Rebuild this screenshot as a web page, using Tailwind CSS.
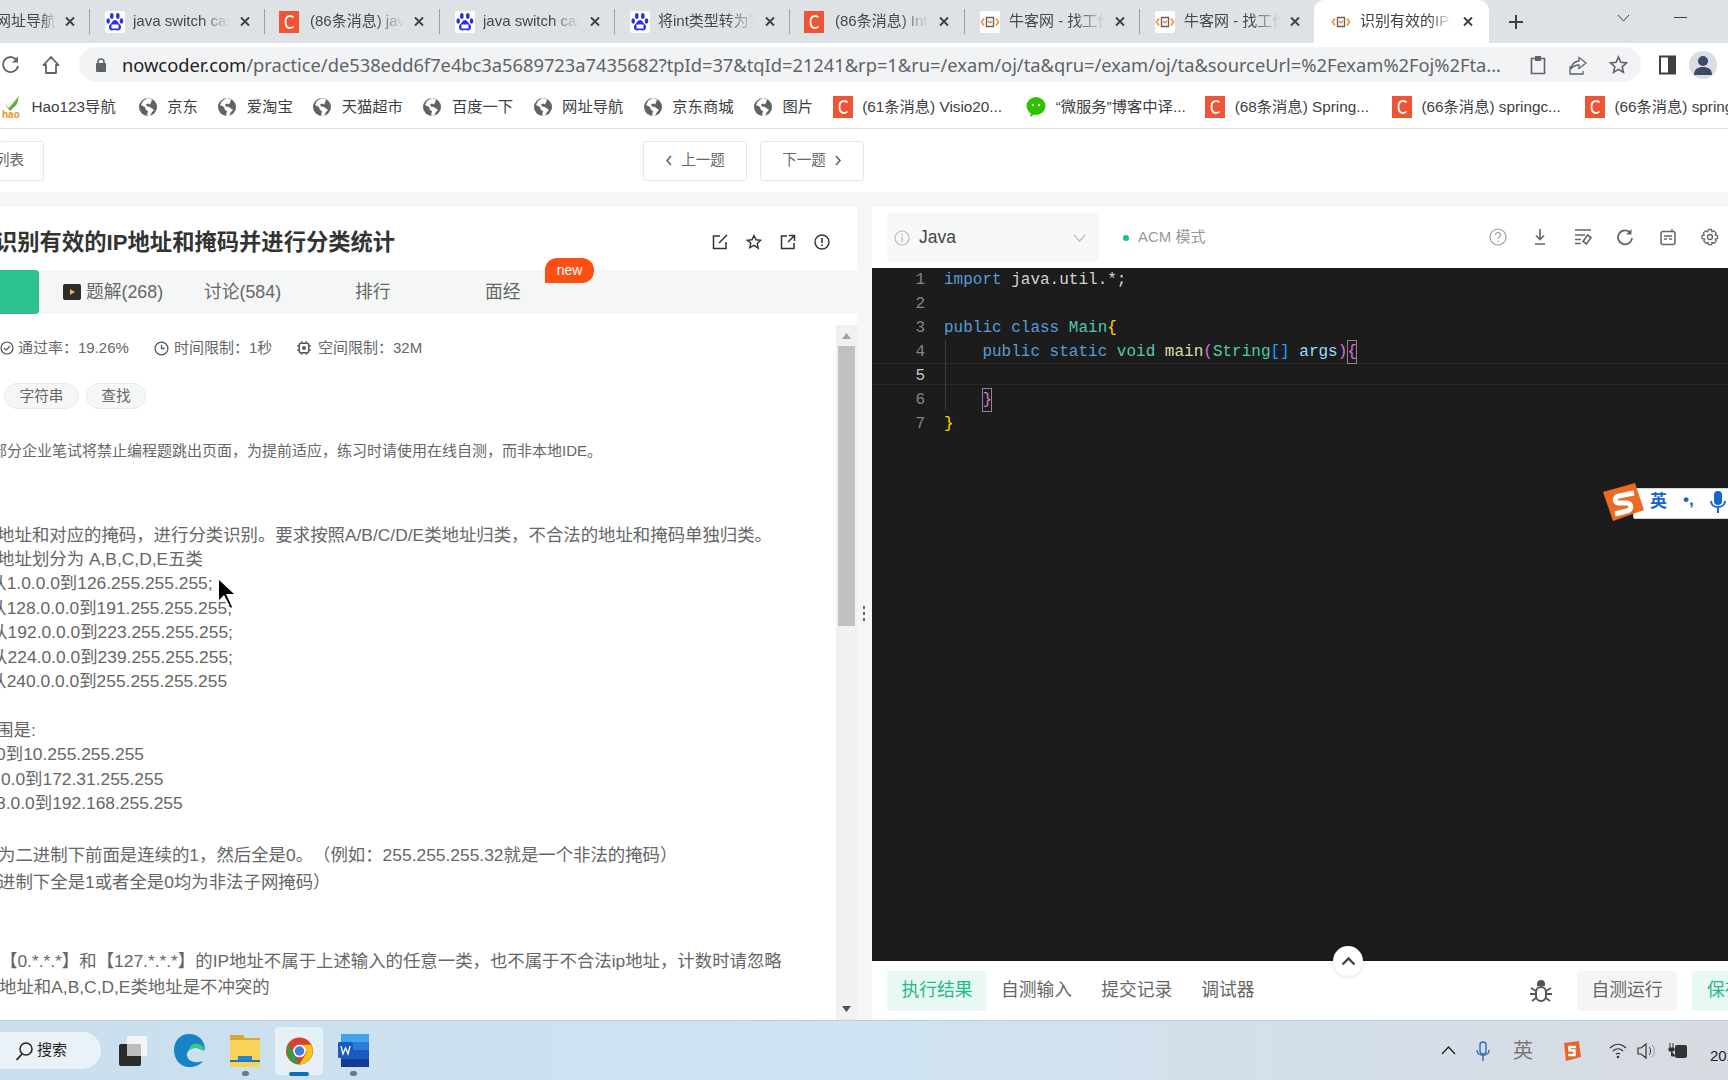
<!DOCTYPE html>
<html lang="zh">
<head>
<meta charset="utf-8">
<title>识别有效的IP地址和掩码并进行分类统计</title>
<script src="https://cdn.jsdelivr.net/npm/@tailwindcss/browser@4"></script>
</head>
<body class="overflow-hidden">
<svg class="absolute w-0 h-0">
  <symbol id="globe" viewBox="0 0 20 20"><circle cx="10" cy="10" r="9" fill="#5f6368"/><path d="M9 1.500 5 4 3 8l4 2 1 3 2 1-1 4.500 3 .5 2-4 2-2-4-3-3-.5-1-2 2-1 2 1 1-2 1-3-4-1.500Z" fill="#fff"/></symbol>
  <symbol id="csdn" viewBox="0 0 20 22"><rect width="20" height="22" fill="#ef5434"/><path d="M14.500 6.500C13.500 5.200 12 5 11 5 8 5 6.500 7.800 6.500 11s1.500 6 4.500 6c1 0 2.500-.3 3.500-1.500" fill="none" stroke="#fff" stroke-width="1.800"/></symbol>
  <symbol id="baidu" viewBox="0 0 20 22"><rect width="20" height="22" rx="2" fill="#fff"/><g fill="#2932e1"><ellipse cx="6.800" cy="5" rx="1.800" ry="3"/><ellipse cx="12.800" cy="5" rx="1.800" ry="3"/><ellipse cx="3.200" cy="10" rx="1.800" ry="2.800"/><ellipse cx="16.500" cy="10" rx="1.800" ry="2.800"/><path d="M10 9c-2.500 0-3 3-5 4.500C3 15.500 4 19.500 7 19.500c1.300 0 2-.4 3-.4s1.800.4 3 .4c3 0 4-4 2-6C13 12 12.500 9 10 9Z"/></g><rect x="6.500" y="13.500" width="7" height="4" fill="#fff"/></symbol>
  <symbol id="nk" viewBox="0 0 20 22"><rect width="20" height="22" rx="2" fill="#fff"/><path d="M6.500 6.500h7v9h-7Z" fill="none" stroke="#6b6258" stroke-width="1.400"/><path d="m8 10 2 2 2-2" fill="none" stroke="#b98a4a" stroke-width="1.100"/><path d="M4 7.500 1.500 11 4 14.500M16 7.500l2.500 3.500-2.500 3.500" fill="none" stroke="#ef9a3c" stroke-width="1.800"/></symbol>
  <symbol id="x" viewBox="0 0 12 12"><path d="m2 2 8 8M10 2l-8 8" stroke="#3c4043" stroke-width="1.800"/></symbol>
</svg>

<div class="relative w-[1728px] h-[1080px] overflow-hidden flex flex-col bg-white text-[#666] font-['Liberation_Sans','Noto_Sans_CJK_SC',sans-serif]">

  <!-- browser tabs -->
  <div class="h-[43px] shrink-0 bg-[#dee1e6] flex items-stretch text-[15px] text-[#45474a]">
    <div class="relative w-[90px] shrink-0 flex items-center overflow-hidden">
      <span class="w-[56px] overflow-hidden whitespace-nowrap flex justify-end [mask-image:linear-gradient(to_right,black_75%,transparent)]">网址导航</span>
      <svg class="ml-[8px] w-[12px] h-[13px]"><use href="#x"/></svg>
      <span class="absolute right-0 top-[9px] w-px h-[25px] bg-[#9aa0a6]"></span>
    </div>
    <div class="relative w-[175px] shrink-0 flex items-center pl-[15px]">
      <svg class="w-[20px] h-[22px] shrink-0"><use href="#baidu"/></svg>
      <span class="ml-[8px] w-[97px] overflow-hidden whitespace-nowrap [mask-image:linear-gradient(to_right,black_70%,transparent)]">java switch case</span>
      <svg class="ml-[9px] w-[12px] h-[13px]"><use href="#x"/></svg>
      <span class="absolute right-0 top-[9px] w-px h-[25px] bg-[#9aa0a6]"></span>
    </div>
    <div class="relative w-[175px] shrink-0 flex items-center pl-[14px]">
      <svg class="w-[20px] h-[22px] shrink-0"><use href="#csdn"/></svg>
      <span class="ml-[11px] w-[94px] overflow-hidden whitespace-nowrap [mask-image:linear-gradient(to_right,black_70%,transparent)]">(86条消息) java</span>
      <svg class="ml-[9px] w-[12px] h-[13px]"><use href="#x"/></svg>
      <span class="absolute right-0 top-[9px] w-px h-[25px] bg-[#9aa0a6]"></span>
    </div>
    <div class="relative w-[175px] shrink-0 flex items-center pl-[15px]">
      <svg class="w-[20px] h-[22px] shrink-0"><use href="#baidu"/></svg>
      <span class="ml-[8px] w-[97px] overflow-hidden whitespace-nowrap [mask-image:linear-gradient(to_right,black_70%,transparent)]">java switch case</span>
      <svg class="ml-[9px] w-[12px] h-[13px]"><use href="#x"/></svg>
      <span class="absolute right-0 top-[9px] w-px h-[25px] bg-[#9aa0a6]"></span>
    </div>
    <div class="relative w-[175px] shrink-0 flex items-center pl-[15px]">
      <svg class="w-[20px] h-[22px] shrink-0"><use href="#baidu"/></svg>
      <span class="ml-[8px] w-[97px] overflow-hidden whitespace-nowrap [mask-image:linear-gradient(to_right,black_70%,transparent)]">将int类型转为字符</span>
      <svg class="ml-[9px] w-[12px] h-[13px]"><use href="#x"/></svg>
      <span class="absolute right-0 top-[9px] w-px h-[25px] bg-[#9aa0a6]"></span>
    </div>
    <div class="relative w-[175px] shrink-0 flex items-center pl-[14px]">
      <svg class="w-[20px] h-[22px] shrink-0"><use href="#csdn"/></svg>
      <span class="ml-[11px] w-[94px] overflow-hidden whitespace-nowrap [mask-image:linear-gradient(to_right,black_70%,transparent)]">(86条消息) Int</span>
      <svg class="ml-[9px] w-[12px] h-[13px]"><use href="#x"/></svg>
      <span class="absolute right-0 top-[9px] w-px h-[25px] bg-[#9aa0a6]"></span>
    </div>
    <div class="relative w-[175px] shrink-0 flex items-center pl-[15px]">
      <svg class="w-[20px] h-[22px] shrink-0"><use href="#nk"/></svg>
      <span class="ml-[9px] w-[96px] overflow-hidden whitespace-nowrap [mask-image:linear-gradient(to_right,black_70%,transparent)]">牛客网 - 找工作</span>
      <svg class="ml-[9px] w-[12px] h-[13px]"><use href="#x"/></svg>
      <span class="absolute right-0 top-[9px] w-px h-[25px] bg-[#9aa0a6]"></span>
    </div>
    <div class="relative w-[174px] shrink-0 flex items-center pl-[15px]">
      <svg class="w-[20px] h-[22px] shrink-0"><use href="#nk"/></svg>
      <span class="ml-[9px] w-[96px] overflow-hidden whitespace-nowrap [mask-image:linear-gradient(to_right,black_70%,transparent)]">牛客网 - 找工作</span>
      <svg class="ml-[9px] w-[12px] h-[13px]"><use href="#x"/></svg>
    </div>
    <div class="w-[175px] shrink-0 flex items-center pl-[17px] bg-white rounded-t-[10px] text-[#3c4043]">
      <svg class="w-[20px] h-[22px] shrink-0"><use href="#nk"/></svg>
      <span class="ml-[9px] w-[92px] overflow-hidden whitespace-nowrap [mask-image:linear-gradient(to_right,black_75%,transparent)]">识别有效的IP地址</span>
      <svg class="ml-[10px] w-[12px] h-[13px]"><use href="#x"/></svg>
    </div>
    <svg class="ml-[19px] self-center w-[16px] h-[16px]" viewBox="0 0 16 16"><path d="M8 1v14M1 8h14" stroke="#3c4043" stroke-width="2"/></svg>
    <svg class="ml-[93px] self-center w-[13px] h-[8px] -mt-[8px]" viewBox="0 0 13 8"><path d="m1 1 5.500 6L12 1" fill="none" stroke="#3c4043"/></svg>
    <span class="ml-[44px] self-center w-[13px] h-px bg-[#3c4043] -mt-[8px]"></span>
  </div>

  <!-- address bar -->
  <div class="h-[43px] shrink-0 bg-white flex items-center">
    <svg class="ml-[2px] w-[18px] h-[20px]" viewBox="0 0 18 20"><path d="M15 5.500A7.500 7.500 0 1 0 16 11" fill="none" stroke="#5f6368" stroke-width="1.800"/><path d="M16 1.500v6h-6Z" fill="#5f6368"/></svg>
    <svg class="ml-[22px] w-[18px] h-[20px]" viewBox="0 0 18 20"><path d="M9 2 1.500 10H4v8h10v-8h2.500Z" fill="none" stroke="#5f6368" stroke-width="1.800" stroke-linejoin="round"/></svg>
    <div class="ml-[19px] w-[1562px] h-[35px] rounded-full bg-[#f1f3f4] flex items-center">
      <svg class="ml-[16px] w-[12px] h-[16px] shrink-0" viewBox="0 0 12 16"><path d="M3 7V5a3 3 0 0 1 6 0v2" fill="none" stroke="#5f6368" stroke-width="1.500"/><rect y="6" x="1" width="10" height="9" rx="1" fill="#5f6368"/></svg>
      <span class="ml-[15px] w-[1384px] shrink-0 whitespace-nowrap overflow-hidden text-[18.3px] text-[#5f6368] font-['Noto_Sans','Liberation_Sans',sans-serif]"><span class="text-[#202124]">nowcoder.com</span>/practice/de538edd6f7e4bc3a5689723a7435682?tpId=37&amp;tqId=21241&amp;rp=1&amp;ru=/exam/oj/ta&amp;qru=/exam/oj/ta&amp;sourceUrl=%2Fexam%2Foj%2Fta...</span>
      <svg class="ml-[24px] w-[16px] h-[20px] shrink-0" viewBox="0 0 16 20"><path d="M1.500 3.500h13v15h-13Z" fill="none" stroke="#5f6368" stroke-width="1.600"/><rect x="5" y="1" width="6" height="5" fill="#5f6368"/></svg>
      <svg class="ml-[23px] w-[18px] h-[20px] shrink-0" viewBox="0 0 18 20"><path d="M10 2.500 17 8l-7 5.500V10c-4 0-6 1-8 4 .5-4 3-7.500 8-8Z M1 11v8h13v-3" fill="none" stroke="#5f6368" stroke-width="1.300"/></svg>
      <svg class="ml-[22px] w-[19px] h-[20px] shrink-0" viewBox="0 0 19 20"><path d="m9.500 2 2.300 5.300 5.700.6-4.300 3.800 1.200 5.700-4.900-3-4.900 3 1.200-5.700L1.500 7.900l5.700-.6Z" fill="none" stroke="#5f6368" stroke-width="1.600"/></svg>
    </div>
    <svg class="ml-[18px] w-[17px] h-[20px]" viewBox="0 0 17 20"><path d="M1 1.500h15v17H1Z" fill="none" stroke="#3c4043" stroke-width="2"/><rect x="9" y="1" width="7" height="18" fill="#3c4043"/></svg>
    <div class="ml-[13px] w-[28px] h-[28px] rounded-full bg-[#d8dde6] flex items-center justify-center overflow-hidden">
      <svg class="w-[18px] h-[20px]" viewBox="0 0 18 20"><circle cx="9" cy="6" r="5" fill="#3c4b63"/><path d="M0 20c0-6 4-8 9-8s9 2 9 8Z" fill="#3c4b63"/></svg>
    </div>
  </div>

  <!-- bookmarks -->
  <div class="h-[43px] shrink-0 bg-white border-b border-[#e0e0e0] flex items-center gap-[19.5px] text-[15.3px] text-[#3c4043] whitespace-nowrap pl-[2px]">
    <div class="flex items-center gap-[9.5px] mr-[2.5px]">
      <svg class="w-[20px] h-[24px]" viewBox="0 0 20 24"><path d="M2 8 7 13 17 1l-2 8-7 7Z" fill="#5fae2c"/><text x="0" y="23" font-size="10" font-weight="700" fill="#e8941f" font-family="Liberation Sans">hao</text></svg>
      <span>Hao123导航</span>
    </div>
    <div class="flex items-center gap-[9.5px]"><svg class="w-[20px] h-[20px]"><use href="#globe"/></svg><span>京东</span></div>
    <div class="flex items-center gap-[9.5px]"><svg class="w-[20px] h-[20px]"><use href="#globe"/></svg><span>爱淘宝</span></div>
    <div class="flex items-center gap-[9.5px]"><svg class="w-[20px] h-[20px]"><use href="#globe"/></svg><span>天猫超市</span></div>
    <div class="flex items-center gap-[9.5px]"><svg class="w-[20px] h-[20px]"><use href="#globe"/></svg><span>百度一下</span></div>
    <div class="flex items-center gap-[9.5px]"><svg class="w-[20px] h-[20px]"><use href="#globe"/></svg><span>网址导航</span></div>
    <div class="flex items-center gap-[9.5px]"><svg class="w-[20px] h-[20px]"><use href="#globe"/></svg><span>京东商城</span></div>
    <div class="flex items-center gap-[9.5px]"><svg class="w-[20px] h-[20px]"><use href="#globe"/></svg><span>图片</span></div>
    <div class="flex items-center gap-[9.5px] mr-[4.5px]"><svg class="w-[20px] h-[22px]"><use href="#csdn"/></svg><span>(61条消息) Visio20...</span></div>
    <div class="flex items-center gap-[9.5px]"><svg class="w-[20px] h-[22px]" viewBox="0 0 20 22"><ellipse cx="10" cy="10" rx="9.500" ry="9" fill="#2dc100"/><path d="M5 16l-1 5 5-3Z" fill="#2dc100"/><circle cx="7" cy="9" r="1.200" fill="#fff"/><circle cx="13" cy="9" r="1.200" fill="#fff"/></svg><span>“微服务”博客中译...</span></div>
    <div class="flex items-center gap-[9.5px] mr-[3.5px]"><svg class="w-[20px] h-[22px]"><use href="#csdn"/></svg><span>(68条消息) Spring...</span></div>
    <div class="flex items-center gap-[9.5px] mr-[4.5px]"><svg class="w-[20px] h-[22px]"><use href="#csdn"/></svg><span>(66条消息) springc...</span></div>
    <div class="flex items-center gap-[9.5px]"><svg class="w-[20px] h-[22px]"><use href="#csdn"/></svg><span>(66条消息) springc...</span></div>
  </div>

  <!-- page header -->
  <div class="h-[63px] shrink-0 bg-white flex items-center text-[14.5px] text-[#666]">
    <div class="w-[44px] h-[40px] rounded-[3px] border border-l-0 border-[#e4e6e8] flex items-center justify-end pr-[19px] whitespace-nowrap overflow-hidden"><span>列表</span></div>
    <div class="ml-[599px] w-[104px] h-[40px] rounded-[3px] border border-[#e4e6e8] flex items-center justify-center gap-[9px]">
      <svg class="w-[7px] h-[11px]" viewBox="0 0 7 11"><path d="M6 1 2 5.500 6 10" fill="none" stroke="#666" stroke-width="1.600"/></svg><span>上一题</span>
    </div>
    <div class="ml-[13px] w-[104px] h-[40px] rounded-[3px] border border-[#e4e6e8] flex items-center justify-center gap-[9px]">
      <span>下一题</span><svg class="w-[7px] h-[11px]" viewBox="0 0 7 11"><path d="m1 1 4 4.500L1 10" fill="none" stroke="#666" stroke-width="1.600"/></svg>
    </div>
  </div>

  <!-- main -->
  <div class="relative flex-1 min-h-0 bg-[#f5f7f7] pt-[15px] flex">

    <!-- left panel -->
    <div class="w-[857px] shrink-0 bg-white flex flex-col">
      <div class="h-[63px] shrink-0 flex items-center">
        <h1 class="-ml-[5px] mt-[10px] text-[22.3px] font-bold text-[#333] whitespace-nowrap leading-none">识别有效的IP地址和掩码并进行分类统计</h1>
        <div class="ml-auto mt-[6px] mr-[27px] flex items-center gap-[18px]">
          <svg class="w-[16px] h-[16px]" viewBox="0 0 16 16"><path d="M8 2H1.500v12.500h12.500V8M15 1 7 9" fill="none" stroke="#333" stroke-width="1.500"/></svg>
          <svg class="w-[16px] h-[16px]" viewBox="0 0 16 16"><path d="m8 1.500 2 4.300 4.700.5-3.500 3.200 1 4.700L8 11.300l-4.200 2.400 1-4.700L1.300 6.300 6 5.800Z" fill="none" stroke="#333" stroke-width="1.400"/></svg>
          <svg class="w-[16px] h-[16px]" viewBox="0 0 16 16"><path d="M7 2H1.500v12.500h12.500V9M9 1.500h5.500V7M14 2 8 8" fill="none" stroke="#333" stroke-width="1.500"/></svg>
          <svg class="w-[16px] h-[16px]" viewBox="0 0 16 16"><circle cx="8" cy="8" r="7" fill="none" stroke="#333" stroke-width="1.400"/><path d="M8 4v5M8 10.500v1.500" stroke="#333" stroke-width="1.600"/></svg>
        </div>
      </div>
      <div class="relative h-[44px] shrink-0 bg-[#f5f7f7] flex items-center text-[17.8px] text-[#666] whitespace-nowrap">
        <div class="w-[39px] h-full bg-[#2dc18f] rounded-r-[4px]"></div>
        <svg class="ml-[24px] w-[18px] h-[16px]" viewBox="0 0 18 16"><rect width="18" height="16" rx="2" fill="#2f2b26"/><path d="m7 5 5 3-5 3Z" fill="#e9b44c"/></svg>
        <span class="ml-[5px] w-[77px]">题解(268)</span>
        <span class="ml-[41px] w-[78px]">讨论(584)</span>
        <span class="ml-[73px] w-[36px]">排行</span>
        <span class="ml-[94px] w-[36px]">面经</span>
        <span class="absolute left-[545px] -top-[12px] w-[49px] h-[25px] bg-[#fb4f14] text-white text-[14px] rounded-t-[12px] rounded-br-[12px] flex items-center justify-center">new</span>
      </div>
      <div class="flex-1 min-h-0 flex">
        <div class="flex-1 min-w-0 overflow-hidden pt-[24px] text-[#666]">
          <div class="h-[20px] flex items-center text-[15px] whitespace-nowrap">
            <svg class="w-[14px] h-[14px]" viewBox="0 0 14 14"><circle cx="7" cy="7" r="6" fill="none" stroke="#555" stroke-width="1.200"/><path d="m4 7 2.200 2.200L10 5" fill="none" stroke="#555" stroke-width="1.200"/></svg>
            <span class="ml-[4px] w-[112px]">通过率：19.26%</span>
            <svg class="ml-[24px] w-[15px] h-[15px]" viewBox="0 0 14 14"><circle cx="7" cy="7" r="6" fill="none" stroke="#555" stroke-width="1.200"/><path d="M7 3.500V7h3" fill="none" stroke="#555" stroke-width="1.200"/></svg>
            <span class="ml-[5px] w-[99px]">时间限制：1秒</span>
            <svg class="ml-[23px] w-[16px] h-[16px]" viewBox="0 0 15 15"><rect x="3" y="3" width="9" height="9" rx="2" fill="none" stroke="#555" stroke-width="1.400"/><circle cx="7.500" cy="7.500" r="1.800" fill="#555"/><path d="M5.500 1v2M9.500 1v2M5.500 12v2M9.500 12v2M1 5.500h2M1 9.500h2M12 5.500h2M12 9.500h2" stroke="#555"/></svg>
            <span class="ml-[6px]">空间限制：32M</span>
          </div>
          <div class="mt-[25px] ml-[4px] flex gap-[7px] text-[14.7px]">
            <span class="w-[75px] h-[26px] rounded-full bg-[#f5f6f6] border border-[#e8eaea] flex items-center justify-center">字符串</span>
            <span class="w-[60px] h-[26px] rounded-full bg-[#f5f6f6] border border-[#e8eaea] flex items-center justify-center">查找</span>
          </div>
          <p class="mt-[32px] -ml-[8px] h-[20px] leading-[20px] text-[15px] whitespace-nowrap">部分企业笔试将禁止编程题跳出页面，为提前适应，练习时请使用在线自测，而非本地IDE。</p>
          <div class="mt-[61.5px] -ml-[71.5px] text-[17.4px] leading-[24.4px] whitespace-nowrap [text-spacing-trim:space-all]">
            <p>请解析IP地址和对应的掩码，进行分类识别。要求按照A/B/C/D/E类地址归类，不合法的地址和掩码单独归类。</p>
            <p>所有的IP地址划分为 A,B,C,D,E五类</p>
            <p class="-ml-[3px]">A类地址从1.0.0.0到126.255.255.255;</p>
            <p class="-ml-[3px]">B类地址从128.0.0.0到191.255.255.255;</p>
            <p class="-ml-[3px]">C类地址从192.0.0.0到223.255.255.255;</p>
            <p class="-ml-[3px]">D类地址从224.0.0.0到239.255.255.255;</p>
            <p class="-ml-[3px]">E类地址从240.0.0.0到255.255.255.255</p>
            <p class="h-[24.4px]"></p>
            <p class="-ml-[1px]">私网IP范围是:</p>
            <p class="-ml-[3px]">从10.0.0.0到10.255.255.255</p>
            <p class="-ml-[3px]">从172.16.0.0到172.31.255.255</p>
            <p class="-ml-[3px]">从192.168.0.0到192.168.255.255</p>
          </div>
          <div class="mt-[27px] -ml-[71.5px] text-[17.4px] leading-[26.4px] whitespace-nowrap [text-spacing-trim:space-all]">
            <p>子网掩码为二进制下前面是连续的1，然后全是0。（例如：255.255.255.32就是一个非法的掩码）</p>
            <p>（注意二进制下全是1或者全是0均为非法子网掩码）</p>
            <p class="h-[26.4px]"></p>
            <p>注意：</p>
            <p>1. 类似于【0.*.*.*】和【127.*.*.*】的IP地址不属于上述输入的任意一类，也不属于不合法ip地址，计数时请忽略</p>
            <p>2. 私有IP地址和A,B,C,D,E类地址是不冲突的</p>
          </div>
        </div>
        <div class="w-[21px] shrink-0 mt-[11px] bg-[#f1f1f1] flex flex-col items-center">
          <svg class="mt-[8px] w-[9px] h-[6px]" viewBox="0 0 9 6"><path d="M4.500 0 9 6H0Z" fill="#a3a3a3"/></svg>
          <div class="mt-[7px] w-[17px] h-[280px] bg-[#c1c1c1]"></div>
          <svg class="mt-auto mb-[8px] w-[9px] h-[6px]" viewBox="0 0 9 6"><path d="M4.500 6 9 0H0Z" fill="#505050"/></svg>
        </div>
      </div>
    </div>

    <!-- drag handle -->
    <div class="absolute left-[863px] top-[414px] flex flex-col gap-[3px]">
      <span class="w-[2px] h-[3px] bg-[#666]"></span><span class="w-[2px] h-[3px] bg-[#666]"></span><span class="w-[2px] h-[3px] bg-[#666]"></span>
    </div>

    <!-- right panel -->
    <div class="ml-[15px] flex-1 min-w-0 bg-white flex flex-col">
      <div class="h-[61px] shrink-0 flex items-center">
        <div class="ml-[15px] w-[212px] h-[49px] rounded-[4px] bg-[#f7f8f8] flex items-center">
          <svg class="ml-[7px] w-[16px] h-[16px]" viewBox="0 0 16 16"><circle cx="8" cy="8" r="7" fill="none" stroke="#bbb" stroke-width="1.200"/><path d="M8 7v5M8 4v1.500" stroke="#bbb" stroke-width="1.300"/></svg>
          <span class="ml-[9px] text-[17.5px] text-[#444]">Java</span>
          <svg class="ml-auto mr-[13px] w-[13px] h-[8px]" viewBox="0 0 13 8"><path d="m1 1 5.500 6L12 1" fill="none" stroke="#bbb" stroke-width="1.200"/></svg>
        </div>
        <span class="ml-[24px] w-[6px] h-[6px] rounded-full bg-[#1ebd8c]"></span>
        <span class="ml-[9px] text-[15px] text-[#999]">ACM 模式</span>
        <div class="ml-auto mr-[9px] -mt-[1px] flex items-center gap-[24.400px]">
          <svg class="w-[18px] h-[18px]" viewBox="0 0 18 18"><circle cx="9" cy="9" r="8" fill="none" stroke="#999" stroke-width="1.100"/><path d="M6.500 7c0-3.300 5-3.300 5 0 0 2-2.500 2-2.500 4M9 12.500V14" fill="none" stroke="#999" stroke-width="1.100"/></svg>
          <svg class="w-[18px] h-[18px]" viewBox="0 0 18 18"><path d="M9 1v10M5 7.500 9 11.500l4-4M4 16h10" fill="none" stroke="#666" stroke-width="1.600"/></svg>
          <svg class="w-[18px] h-[18px]" viewBox="0 0 18 18"><path d="M1 2h16M1 7h10M1 11.500h6M1 15.500h6" stroke="#666" stroke-width="1.500"/><path d="m13.500 7 3.500 2.500-4.500 6.500-3.500-2.500Z" fill="none" stroke="#666" stroke-width="1.600"/></svg>
          <svg class="w-[18px] h-[18px]" viewBox="0 0 18 18"><path d="M14.500 5A7 7 0 1 0 16 10" fill="none" stroke="#666" stroke-width="1.800"/><path d="M15.500 1v5.500H10Z" fill="#666"/></svg>
          <svg class="w-[18px] h-[18px]" viewBox="0 0 18 18"><rect x="2" y="3.500" width="14" height="13" rx="2" fill="none" stroke="#666" stroke-width="1.500"/><path d="M13 1v3M5 8h8M5 11h3M10 11h3" stroke="#666" stroke-width="1.300"/></svg>
          <svg class="w-[18px] h-[18px]" viewBox="0 0 18 18"><path d="m7.500 1.500h3l.5 2.300 2-.9 2.200 2.200-1 2 2.300.5v3l-2.300.5 1 2-2.200 2.200-2-1-.5 2.300h-3l-.5-2.300-2 1-2.200-2.200 1-2L1 10.600v-3l2.300-.5-1-2 2.200-2.200 2 .9Z" fill="none" stroke="#666" stroke-width="1.300" stroke-linejoin="round"/><circle cx="9" cy="9" r="2.500" fill="none" stroke="#666" stroke-width="1.300"/></svg>
        </div>
      </div>

      <div class="relative flex-1 min-h-0 bg-[#1c1c1c] text-[16px] leading-[24px] font-['Liberation_Mono',monospace] overflow-hidden">
        <div class="absolute left-0 right-0 top-[95px] h-[22px] border-y border-[#282828]"></div>
        <div class="absolute left-[73px] top-[72px] w-px h-[70px] bg-[#3e3e3e]"></div>
        <div class="relative">
          <div class="flex h-[24px]"><span class="w-[53px] text-right text-[#858585]">1</span><span class="ml-[19px] whitespace-pre text-[#d4d4d4]"><span class="text-[#569cd6]">import</span> java.util.*;</span></div>
          <div class="flex h-[24px]"><span class="w-[53px] text-right text-[#858585]">2</span></div>
          <div class="flex h-[24px]"><span class="w-[53px] text-right text-[#858585]">3</span><span class="ml-[19px] whitespace-pre"><span class="text-[#569cd6]">public class</span> <span class="text-[#4ec9b0]">Main</span><span class="text-[#ffd700]">{</span></span></div>
          <div class="flex h-[24px]"><span class="w-[53px] text-right text-[#858585]">4</span><span class="ml-[19px] whitespace-pre">    <span class="text-[#569cd6]">public static</span> <span class="text-[#4ec9b0]">void</span> <span class="text-[#dcdcaa]">main</span><span class="text-[#da70d6]">(</span><span class="text-[#4ec9b0]">String</span><span class="text-[#179fff]">[]</span> <span class="text-[#9cdcfe]">args</span><span class="text-[#da70d6]">)</span><span class="inline-block h-[24px] text-[#da70d6] outline outline-1 -outline-offset-1 outline-[#888]">{</span></span></div>
          <div class="flex h-[24px]"><span class="w-[53px] text-right text-[#c6c6c6]">5</span></div>
          <div class="flex h-[24px]"><span class="w-[53px] text-right text-[#858585]">6</span><span class="ml-[19px] whitespace-pre">    <span class="inline-block h-[24px] text-[#da70d6] outline outline-1 -outline-offset-1 outline-[#888]">}</span></span></div>
          <div class="flex h-[24px]"><span class="w-[53px] text-right text-[#858585]">7</span><span class="ml-[19px] text-[#ffd700]">}</span></div>
        </div>
      </div>

      <div class="relative h-[59px] shrink-0 flex items-center text-[17.8px] text-[#666] whitespace-nowrap">
        <span class="ml-[15px] w-[100px] h-[40px] rounded-[4px] bg-[#e8f8f3] text-[#1fb98a] flex items-center justify-center">执行结果</span>
        <span class="ml-[14px]">自测输入</span>
        <span class="ml-[29px]">提交记录</span>
        <span class="ml-[29px]">调试器</span>
        <div class="absolute left-[461px] -top-[15px] w-[30px] h-[30px] rounded-full bg-white shadow-[0_1px_4px_rgba(0,0,0,0.12)] flex items-center justify-center">
          <svg class="w-[15px] h-[9px]" viewBox="0 0 15 9"><path d="m1.500 7.500 6-6 6 6" fill="none" stroke="#444" stroke-width="2.400"/></svg>
        </div>
        <svg class="ml-auto w-[24px] h-[24px]" viewBox="0 0 24 24"><path d="M12 1c-2.500 0-4 1.500-4 4v2h8V5c0-2.500-1.500-4-4-4Z" fill="#555"/><rect x="7" y="8" width="10" height="14" rx="5" fill="none" stroke="#555" stroke-width="2"/><path d="M2 9l5 3M22 9l-5 3M1 15h6M23 15h-6M3 22l4-3M21 22l-4-3" stroke="#555" stroke-width="1.800"/></svg>
        <span class="ml-[24px] w-[100px] h-[40px] rounded-[4px] bg-[#f5f5f5] flex items-center justify-center">自测运行</span>
        <span class="ml-[15px] -mr-[64px] w-[100px] h-[40px] rounded-[4px] bg-[#e8f8f3] text-[#1fb98a] flex items-center pl-[15px] shrink-0">保存并调试</span>
      </div>
    </div>
  </div>

  <!-- taskbar -->
  <div class="h-[60px] shrink-0 border-t border-[#bcd0de] bg-gradient-to-r from-[#cadfee] via-[#cfe3f2] to-[#d8dbe1] flex items-center text-[15px] text-[#1f1f1f] whitespace-nowrap *:shrink-0">
    <div class="w-[101px] h-[37px] rounded-r-full bg-[#eaf2f8] flex items-center pl-[15px]">
      <svg class="w-[18px] h-[20px]" viewBox="0 0 18 20"><circle cx="11" cy="8" r="6" fill="none" stroke="#222" stroke-width="1.500"/><path d="M7 13 1.500 19" stroke="#222" stroke-width="1.800"/></svg>
      <span class="ml-[4px]">搜索</span>
    </div>
    <svg class="ml-[18px] w-[30px] h-[30px]" viewBox="0 0 30 30"><rect x="8" y="0" width="20" height="20" fill="#f4f4f4"/><rect x="0" y="8" width="22" height="22" rx="2" fill="#2b2b2b"/><rect x="8" y="8" width="14" height="12" fill="#bdbdbd"/></svg>
    <svg class="ml-[25px] w-[31px] h-[33px]" viewBox="0 0 31 33"><path d="M15 0C6 0 0 7 0 16c0 9 6 17 15 17 6 0 11-2 14-6-5 2-14 2-16-5-1-4 3-8 8-8 5 0 6 3 10 2C31 6 24 0 15 0Z" fill="#1683c9"/><path d="M31 16c-4 1-5-2-10-2-3 0-6 2-7 4 1-6 5-10 11-8 3 1 5 3 6 6Z" fill="#37c88a"/></svg>
    <div class="ml-[25px] relative w-[30px] h-[33px]">
      <svg class="w-[30px] h-[33px]" viewBox="0 0 30 33"><path d="M0 1h13l2 3h15v4H0Z" fill="#d9a43a"/><rect y="6" width="30" height="27" fill="#f7d457"/><rect x="8" y="22" width="14" height="5" fill="#1e88d6"/><rect x="0" y="26" width="30" height="2" fill="#2a73b5"/></svg>
      <span class="absolute left-[12px] top-[37px] w-[7px] h-[5px] rounded-full bg-[#6b7a86]"></span>
    </div>
    <div class="ml-[15px] relative w-[48px] h-[48px] rounded-[4px] bg-[#e6f0f7] flex items-center justify-center">
      <svg class="w-[27px] h-[30px]" viewBox="0 0 30 30"><circle cx="15" cy="15" r="15" fill="#d8412f"/><path d="M15 30 3 8a15 15 0 0 0 12 22Z" fill="#2f9e44"/><path d="M15 8h13a15 15 0 0 1-13 22l8-14Z" fill="#f5c518"/><circle cx="15" cy="15" r="7" fill="#fff"/><circle cx="15" cy="15" r="5.300" fill="#3a7de6"/></svg>
      <span class="absolute left-[14px] bottom-[-1px] w-[20px] h-[4px] rounded-full bg-[#0f6cbd]"></span>
    </div>
    <div class="ml-[15px] relative w-[31px] h-[33px]">
      <svg class="w-[31px] h-[33px]" viewBox="0 0 31 33"><rect x="3" y="0" width="28" height="33" rx="2" fill="#2b7cd3"/><rect x="3" y="16" width="28" height="9" fill="#185abd"/><rect x="3" y="25" width="28" height="8" fill="#103f91"/><rect x="3" y="0" width="28" height="8" fill="#41a5ee"/><rect y="8" width="15" height="16" rx="1" fill="#185abd"/><path d="m3 12 2 8 2.500-6 2.500 6 2-8" fill="none" stroke="#fff" stroke-width="1.300"/></svg>
      <span class="absolute left-[12px] top-[37px] w-[7px] h-[5px] rounded-full bg-[#6b7a86]"></span>
    </div>
    <svg class="ml-[1072px] w-[15px] h-[9px]" viewBox="0 0 15 9"><path d="m1 8 6.500-7L14 8" fill="none" stroke="#222" stroke-width="1.300"/></svg>
    <svg class="ml-[20px] w-[14px] h-[20px]" viewBox="0 0 14 20"><rect x="4" y="1" width="6" height="12" rx="3" fill="none" stroke="#2f6bb8" stroke-width="1.400"/><path d="M1 9c0 7 12 7 12 0M7 15v5" fill="none" stroke="#2f6bb8" stroke-width="1.400"/></svg>
    <span class="ml-[23px] w-[20px] text-[20px] leading-none text-[#777]">英</span>
    <svg class="ml-[28px] w-[20px] h-[20px]" viewBox="0 0 20 20"><path d="M3 2 18 0l2 16-15 4Z" fill="#e8642a"/><path d="M15 6H8.500v3.500h5V14H7" fill="none" stroke="#fff" stroke-width="2.400"/></svg>
    <svg class="ml-[28px] w-[18px] h-[16px]" viewBox="0 0 18 16"><path d="M1 5c5-5 11-5 16 0M4 8c3-3 7-3 10 0M7 11c1.500-1 2.500-1 4 0" fill="none" stroke="#333" stroke-width="1.200"/><circle cx="9" cy="14" r="1.300" fill="#333"/></svg>
    <svg class="ml-[10px] w-[20px] h-[18px]" viewBox="0 0 20 18"><path d="M1 6h3l5-4v14l-5-4H1Z" fill="none" stroke="#333" stroke-width="1.200"/><path d="M12 5c2 2 2 6 0 8" fill="none" stroke="#333"/><path d="M15 3c3 3 3 9 0 12" fill="none" stroke="#999"/></svg>
    <svg class="ml-[11px] w-[20px] h-[18px]" viewBox="0 0 20 18"><rect x="7" y="3" width="12" height="13" rx="2" fill="#333"/><path d="M2 1v5M5 1v5M1 6h5v3H1ZM3.500 9v5h4" fill="#333" stroke="#333"/></svg>
    <span class="ml-[22px] mt-[11px] text-[15px]">2023</span>
  </div>

  <!-- Sogou IME floating bar -->
  <div class="absolute left-[1602px] top-[483px] h-[37px] flex items-center">
    <div class="absolute left-[31px] top-[5px] w-[110px] h-[31px] bg-white border border-[#cfd6dc] rounded-[2px]"></div>
    <svg class="relative w-[43px] h-[38px] shrink-0" viewBox="0 0 43 38"><path d="M1 9 33 0l9 27-31 11Z" fill="#ec6a22"/><path d="M32 10 17 13c-5 1-5 7 0 7h8c5 0 5 7 0 8l-12 3" fill="none" stroke="#fff" stroke-width="5"/></svg>
    <span class="relative ml-[5px] text-[17px] font-bold text-[#1467c8]">英</span>
    <span class="relative ml-[16px] text-[17px] font-bold text-[#1467c8] -mt-[4px] whitespace-nowrap">•,</span>
    <svg class="relative ml-[16px] w-[16px] h-[24px] shrink-0" viewBox="0 0 16 24"><rect x="4" y="1" width="8" height="14" rx="4" fill="#1467c8"/><path d="M1 11c0 8 14 8 14 0M8 18v5" fill="none" stroke="#1467c8" stroke-width="2"/></svg>
  </div>

  <!-- mouse pointer -->
  <svg class="absolute left-[218px] top-[579px] w-[17px] h-[30px]" viewBox="0 0 17 30"><path d="M1 1v20l5-5 7 13 1-1-6-13h8Z" fill="#000"/></svg>
</div>
</body>
</html>
